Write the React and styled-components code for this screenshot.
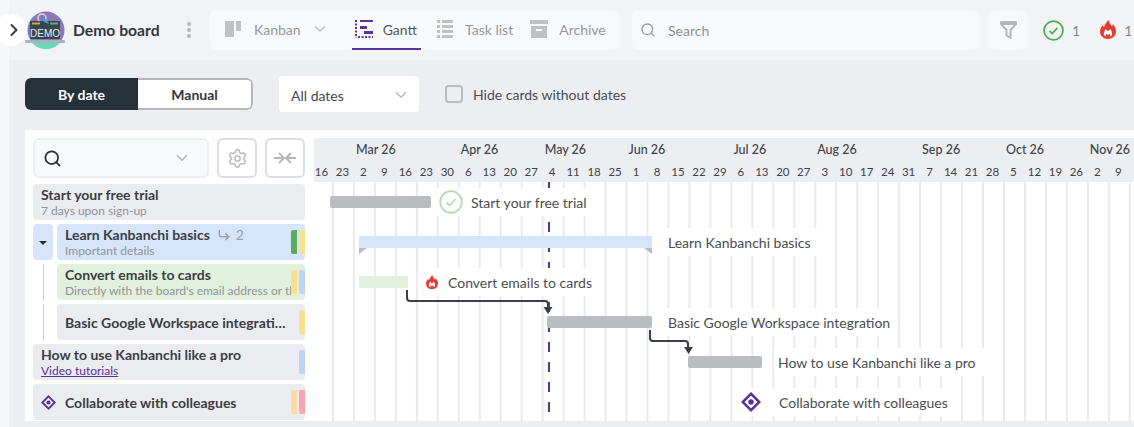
import styled, { createGlobalStyle } from "styled-components";
import { ChevronDown, ChevronRight, Search, Settings, CornerDownRight } from "lucide-react";

const DAYS = [16,23,2,9,16,23,30,6,13,20,27,4,11,18,25,1,8,15,22,29,6,13,20,27,3,10,17,24,31,7,14,21,28,5,12,19,26,2,9];
const MONTHS = [
    { name: "", span: 2 },
    { name: "Mar 26", span: 5 },
    { name: "Apr 26", span: 4 },
    { name: "May 26", span: 4 },
    { name: "Jun 26", span: 5 },
    { name: "Jul 26", span: 4 },
    { name: "Aug 26", span: 5 },
    { name: "Sep 26", span: 4 },
    { name: "Oct 26", span: 4 },
    { name: "Nov 26", span: 2 },
];

function FireIcon({ size = 16 }) {
    return (
        <svg width={size} height={size * 1.19} viewBox="0 0 16 19">
            <path fill="#e23d32" d="M8.500 0c.5 3 2.300 4.500 3.500 6.500.5-.8.8-1.500.7-2.500C14.800 6 16 8.500 16 11.500 16 15.800 12.500 19 8 19S0 15.800 0 11.500C0 8.500 1.500 6.500 3 5c.2 1 .4 1.700 1 2.300C4.500 4.500 6.500 2.500 8.500 0Z" />
            <path fill="#fff" d="M3.800 14.500c0-2.500 1-4 1.700-5.500L8 11.200 10.500 9c.7 1.500 1.700 3 1.700 5.500-.5.9-1.200 1.500-2.200 1.900v-3L8 15l-2-1.600v3c-1-.4-1.700-1-2.200-1.900Z" />
        </svg>
    );
}

function DiamondIcon({ size = 16 }) {
    return (
        <svg width={size} height={size} viewBox="0 0 16 16">
            <path fill="none" stroke="#5a3399" strokeWidth="2" d="M8 1.400 14.600 8 8 14.600 1.400 8Z" />
            <circle cx="8" cy="8" r="2.200" fill="#5a3399" />
        </svg>
    );
}

function CheckIcon({ size, color, weight }) {
    return (
        <svg width={size} height={size} viewBox="0 0 24 24">
            <circle cx="12" cy="12" r="10.800" fill="none" stroke={color} strokeWidth={weight} />
            <path fill="none" stroke={color} strokeWidth={weight} d="M7.500 12.500l3 3 6-6.500" />
        </svg>
    );
}

function Avatar() {
    return (
        <svg width="40" height="40" viewBox="0 0 40 40">
            <circle cx="21" cy="20" r="18.500" fill="#8b78b6" />
            <path fill="#62dcb4" d="M5 30h32a18.500 18.500 0 0 1-32 0Z" />
            <circle cx="17" cy="8" r="4" fill="none" stroke="#d9d2e8" strokeWidth="1.500" />
            <rect x="5" y="11" width="30" height="18" rx="1" fill="#37474f" />
            <rect x="7" y="12.500" width="8" height="2" fill="#c4a94a" />
            <rect x="25" y="12.500" width="8" height="2" fill="#5fb27a" />
            <path fill="#3aa0d8" d="M17 8l5 2 2 4-5-2Z" />
            <text x="20" y="26.500" textAnchor="middle" fontFamily="Liberation Sans" fontSize="10" fill="#e8edf0">DEMO</text>
            <rect x="0" y="30" width="40" height="3" rx="1" fill="#a8b4ba" />
        </svg>
    );
}

export default function App() {
    return (
        <>
            <GlobalStyle />
            <Page>
                <CollapseButton><ChevronRight size={20} strokeWidth={2.500} /></CollapseButton>
                <TopBar>
                    <Avatar />
                    <BoardName>Demo board</BoardName>
                    <Kebab><i /><i /><i /></Kebab>
                    <TabGroup>
                        <Tab $after={7} $gap={13}>
                            <svg width="16" height="16" viewBox="0 0 16 16">
                                <path fill="#bfc1c4" d="M0 0h9v16H0zM11 0h5v10h-5z" />
                            </svg>
                            <TabText>Kanban</TabText>
                            <TabCaret><ChevronDown size={18} color="#bfc1c4" /></TabCaret>
                        </Tab>
                        <Tab $active>
                            <svg width="18" height="18" viewBox="0 0 18 18">
                                <path fill="none" stroke="#5a3399" strokeWidth="2" strokeDasharray="2 1.500" d="M1 0v18M3 17h15" />
                                <path fill="#5a3399" d="M5 0h13v2H5zM5 6h7v3H5zM9 11h9v3H9z" />
                            </svg>
                            <TabText $active>Gantt</TabText>
                        </Tab>
                        <Tab $after={1} $gap={12}>
                            <svg width="16" height="18" viewBox="0 0 16 18">
                                <path fill="#bfc1c4" d="M0 0h3v3H0zM5 0h11v3H5zM0 5h3v3H0zM5 5h11v3H5zM0 10h3v3H0zM5 10h11v3H5zM0 15h3v3H0zM5 15h11v3H5z" />
                            </svg>
                            <TabText>Task list</TabText>
                        </Tab>
                        <Tab $gap={11}>
                            <svg width="18" height="18" viewBox="0 0 18 18">
                                <path fill="#bfc1c4" fillRule="evenodd" d="M0 0h18v4H0zM1 6h16v12H1zM6 9v2h6V9z" />
                            </svg>
                            <TabText>Archive</TabText>
                        </Tab>
                    </TabGroup>
                    <SearchBox>
                        <Search size={16} color="#9a9da1" />
                        <span>Search</span>
                    </SearchBox>
                    <FilterBox>
                        <svg width="17" height="18" viewBox="0 0 17 18">
                            <path fill="none" stroke="#b4b6b9" strokeWidth="2" strokeLinejoin="round" d="M1 1h15v2l-5.500 6v8l-4-2.500V9L1 3Zm0 2h15" />
                        </svg>
                    </FilterBox>
                    <Counter $first>
                        <CheckIcon size={21} color="#4caf50" weight={2} />
                        <CounterValue>1</CounterValue>
                    </Counter>
                    <Counter>
                        <FireIcon size={16} />
                        <CounterValue>1</CounterValue>
                    </Counter>
                </TopBar>

                <Controls>
                    <Toggle>
                        <ToggleOption $on>By date</ToggleOption>
                        <ToggleOption>Manual</ToggleOption>
                    </Toggle>
                    <DateSelect>
                        All dates
                        <ChevronDown size={18} color="#b9bbbe" />
                    </DateSelect>
                    <CheckLabel>
                        <CheckBox />
                        Hide cards without dates
                    </CheckLabel>
                </Controls>

                <Board>
                    <SidePanel>
                        <PanelTools>
                            <CardSearch>
                                <Search size={19} color="#2b2f33" strokeWidth={2.200} />
                                <ChevronDown size={18} color="#b4b6b9" />
                            </CardSearch>
                            <ToolButton><Settings size={21} strokeWidth={1.600} /></ToolButton>
                            <ToolButton>
                                <svg width="22" height="14" viewBox="0 0 22 14">
                                    <path fill="none" stroke="#b4b6b9" strokeWidth="1.800" d="M0 7h9M5 2l5 5-5 5M22 7h-9M17 2l-5 5 5 5" />
                                </svg>
                            </ToolButton>
                        </PanelTools>
                        <Rows>
                            <Card>
                                <CardText>
                                    <CardTitle>Start your free trial</CardTitle>
                                    <CardSub>7 days upon sign-up</CardSub>
                                </CardText>
                            </Card>
                            <TreeRow>
                                <Expander />
                                <Card $tone="#d7e5fb">
                                    <CardText>
                                        <CardTitle>
                                            Learn Kanbanchi basics
                                            <SubCount><CornerDownRight size={14} strokeWidth={2.400} />2</SubCount>
                                        </CardTitle>
                                        <CardSub>Important details</CardSub>
                                    </CardText>
                                    <Tags>
                                        <Tag $color="#5aad5e" />
                                        <Tag $color="#fbe08c" />
                                    </Tags>
                                </Card>
                            </TreeRow>
                            <TreeRow>
                                <TreeLine />
                                <Card $tone="#e2f0dd">
                                    <CardText>
                                        <CardTitle>Convert emails to cards</CardTitle>
                                        <CardSub>Directly with the board's email address or through the add-on</CardSub>
                                    </CardText>
                                    <Tags>
                                        <Tag $color="#fbe08c" />
                                        <Tag $color="#bcd4f6" />
                                    </Tags>
                                </Card>
                            </TreeRow>
                            <TreeRow>
                                <TreeLine />
                                <Card>
                                    <CardText>
                                        <CardTitle>Basic Google Workspace integration</CardTitle>
                                    </CardText>
                                    <Tags>
                                        <Tag $color="#fbe08c" />
                                    </Tags>
                                </Card>
                            </TreeRow>
                            <Card>
                                <CardText>
                                    <CardTitle>How to use Kanbanchi like a pro</CardTitle>
                                    <CardLink>Video tutorials</CardLink>
                                </CardText>
                                <Tags>
                                    <Tag $color="#bcd4f6" />
                                </Tags>
                            </Card>
                            <Card>
                                <MilestoneSlot><DiamondIcon size={15} /></MilestoneSlot>
                                <CardText>
                                    <CardTitle>Collaborate with colleagues</CardTitle>
                                </CardText>
                                <Tags>
                                    <Tag $color="#fbd9a5" />
                                    <Tag $color="#fba6ae" />
                                </Tags>
                            </Card>
                        </Rows>
                    </SidePanel>

                    <Timeline>
                        <TimelineHead>
                            <MonthRow>
                                {MONTHS.map((m, i) => <Month key={i} $span={m.span}>{m.name}</Month>)}
                            </MonthRow>
                            <DayRow>
                                {DAYS.map((d, i) => <Day key={i}>{d}</Day>)}
                            </DayRow>
                        </TimelineHead>
                        <Chart>
                            <TodayLine />
                            <Bar $left={16} $top={14} $width={101} $color="#bbbcbf" />
                            <BarLabel $left={121} $top={6}>
                                <CheckIcon size={24} color="#b5dab8" weight={1.800} />
                                Start your free trial
                            </BarLabel>

                            <Bar $left={45} $top={54} $width={293} $color="#d7e5fb" $square />
                            <Corner $left={45} $top={66} />
                            <Corner $left={330} $top={66} $flip />
                            <BarLabel $left={350} $top={46}>Learn Kanbanchi basics</BarLabel>

                            <Bar $left={45} $top={94} $width={49} $color="#e2f0dd" $square />
                            <BarLabel $left={108} $top={86} $gap={10}>
                                <FireIcon size={12} />
                                Convert emails to cards
                            </BarLabel>

                            <Bar $left={233} $top={134} $width={105} $color="#bbbcbf" />
                            <BarLabel $left={350} $top={126}>Basic Google Workspace integration</BarLabel>

                            <Bar $left={374} $top={174} $width={74} $color="#bbbcbf" />
                            <BarLabel $left={460} $top={166}>How to use Kanbanchi like a pro</BarLabel>

                            <BarLabel $left={423} $top={206} $gap={18}>
                                <DiamondIcon size={20} />
                                Collaborate with colleagues
                            </BarLabel>

                            <Links width="820" height="239" viewBox="0 0 820 239">
                                <path fill="none" stroke="#3b3d4a" strokeWidth="2" d="M93 108v8q0 3 3 3h135q3 0 3 3v6" />
                                <path fill="#3b3d4a" d="M229.500 125h9l-4.500 7Z" />
                                <path fill="none" stroke="#3b3d4a" strokeWidth="2" d="M336 148v8q0 3 3 3h32q3 0 3 3v4" />
                                <path fill="#3b3d4a" d="M370 165h9l-4.500 7Z" />
                            </Links>
                        </Chart>
                    </Timeline>
                </Board>
            </Page>
        </>
    );
}

const GlobalStyle = createGlobalStyle`
    html, body{
        margin: 0;
        height: 427px;
        overflow: hidden;
        background: #f6f7fa;
    }
    *{
        box-sizing: border-box;
    }
`
const Page = styled.div`
    position: relative;
    margin-left: 9px;
    width: 1125px;
    height: 427px;
    background-color: #eceef2;
    font-family: "Lato", "Liberation Sans", sans-serif;
    color: #4a4d52;
    font-size: 14px;
    overflow: visible;
`
const CollapseButton = styled.div`
    position: absolute;
    left: -14px;
    top: 14px;
    width: 32px;
    height: 32px;
    padding-left: 6px;
    border-radius: 50%;
    background: #fff;
    color: #3c4045;
    display: flex;
    align-items: center;
    justify-content: center;
    z-index: 2;
`
const TopBar = styled.header`
    height: 60px;
    padding: 0 0 0 16px;
    display: flex;
    align-items: center;
    background: #f2f3f6;
`
const BoardName = styled.h1`
    margin: 0 0 0 8px;
    width: 114px;
    font-size: 15.700px;
    font-weight: 700;
    color: #33373d;
`
const Kebab = styled.div`
    width: 6px;
    display: flex;
    flex-direction: column;
    gap: 2px;
    i{
        width: 4px;
        height: 4px;
        border-radius: 50%;
        background: #b4b6b9;
    }
`
const TabGroup = styled.nav`
    margin-left: 17px;
    width: 410px;
    height: 40px;
    padding: 0 12px 0 15px;
    display: flex;
    gap: 16px;
    background: #f8f9fb;
    border-radius: 6px;
`
const Tab = styled.div`
    display: flex;
    align-items: center;
    gap: ${p => p.$gap || 10}px;
    height: 40px;
    padding: 0 ${p => (p.$active ? "4px" : "0")} 0 ${p => (p.$active ? "3px" : "0")};
    margin-right: ${p => p.$after || 0}px;
    border-bottom: 2px solid ${p => (p.$active ? "#5a3399" : "transparent")};
`
const TabText = styled.span`
    font-size: 14px;
    color: ${p => (p.$active ? "#55585d" : "#95989c")};
`
const TabCaret = styled.span`
    margin-left: -3px;
    display: flex;
`
const SearchBox = styled.div`
    margin-left: 12px;
    width: 348px;
    height: 40px;
    padding-left: 8px;
    display: flex;
    align-items: center;
    gap: 12px;
    background: #f8f9fb;
    border-radius: 6px;
    color: #8f9296;
`
const FilterBox = styled.div`
    margin-left: 8px;
    width: 40px;
    height: 40px;
    display: flex;
    align-items: center;
    justify-content: center;
    background: #f8f9fb;
    border-radius: 6px;
`
const Counter = styled.div`
    margin-left: ${p => (p.$first ? 15 : 20)}px;
    display: flex;
    align-items: center;
    gap: 8px;
`
const CounterValue = styled.span`
    color: #85888c;
    font-size: 14px;
`
const Controls = styled.div`
    height: 70px;
    padding: 16px 0 0 16px;
    display: flex;
    align-items: flex-start;
`
const Toggle = styled.div`
    margin-top: 2px;
    width: 228px;
    height: 32px;
    display: flex;
    border-radius: 6px;
    overflow: hidden;
    background: #fff;
`
const ToggleOption = styled.div`
    flex: 1;
    display: flex;
    align-items: center;
    justify-content: center;
    font-weight: 700;
    font-size: 14px;
    color: ${p => (p.$on ? "#fff" : "#33373d")};
    background: ${p => (p.$on ? "#25323a" : "#fff")};
    border: ${p => (p.$on ? "none" : "2px solid #b5b7ba")};
    border-left: none;
    border-radius: ${p => (p.$on ? "0" : "0 6px 6px 0")};
`
const DateSelect = styled.div`
    margin-left: 26px;
    width: 140px;
    height: 36px;
    padding: 2px 9px 0 12px;
    display: flex;
    align-items: center;
    justify-content: space-between;
    background: #fff;
    border-radius: 4px;
    color: #43474c;
`
const CheckLabel = styled.label`
    margin: 9px 0 0 26px;
    display: flex;
    align-items: center;
    gap: 10px;
    color: #4a4d52;
`
const CheckBox = styled.span`
    width: 18px;
    height: 18px;
    border: 2px solid #b9bbbe;
    border-radius: 4px;
`
const Board = styled.section`
    margin-left: 16px;
    height: 291px;
    display: flex;
    background: #fff;
`
const SidePanel = styled.aside`
    width: 289px;
    flex-shrink: 0;
    padding: 8px 9px 0 8px;
`
const PanelTools = styled.div`
    height: 40px;
    display: flex;
    gap: 8px;
`
const CardSearch = styled.div`
    width: 176px;
    padding: 0 16px 0 8px;
    display: flex;
    align-items: center;
    justify-content: space-between;
    background: #f8f9fb;
    border: 2px solid #eceef1;
    border-radius: 6px;
`
const ToolButton = styled.div`
    width: 40px;
    display: flex;
    align-items: center;
    justify-content: center;
    color: #b4b6b9;
    border: 2px solid #dcdde0;
    border-radius: 6px;
`
const Rows = styled.div`
    margin-top: 6px;
    display: flex;
    flex-direction: column;
    gap: 4px;
`
const TreeRow = styled.div`
    display: flex;
`
const Expander = styled.div`
    width: 20px;
    height: 36px;
    margin-right: 4px;
    flex-shrink: 0;
    display: flex;
    align-items: center;
    justify-content: center;
    background: #d7e5fb;
    border-radius: 4px;
    &::before{
        content: "";
        margin-top: 1px;
        border: 4px solid transparent;
        border-top: 4px solid #25323a;
        border-bottom: none;
    }
`
const TreeLine = styled.div`
    width: 24px;
    height: 36px;
    flex-shrink: 0;
    padding-left: 10px;
    &::before{
        content: "";
        display: block;
        width: 1px;
        height: 100%;
        background: #c9cbce;
    }
`
const Card = styled.div`
    flex: 1 1 auto;
    min-width: 0;
    height: 36px;
    padding-left: 8px;
    display: flex;
    align-items: center;
    background: ${p => p.$tone || "#ebecef"};
    border-radius: 4px;
    overflow: hidden;
`
const MilestoneSlot = styled.div`
    width: 24px;
    flex-shrink: 0;
    display: flex;
`
const CardText = styled.div`
    flex: 1;
    min-width: 0;
    overflow: hidden;
`
const CardTitle = styled.div`
    padding-right: 3px;
    font-size: 14px;
    line-height: 17px;
    font-weight: 700;
    color: #3a3e44;
    white-space: nowrap;
    overflow: hidden;
    text-overflow: ellipsis;
`
const SubCount = styled.span`
    margin-left: 7px;
    display: inline-flex;
    align-items: center;
    gap: 5px;
    font-weight: 400;
    color: #9a9da1;
    vertical-align: top;
`
const CardSub = styled.div`
    font-size: 12px;
    line-height: 15px;
    color: #90939a;
    white-space: nowrap;
    overflow: hidden;
`
const CardLink = styled.a`
    display: block;
    font-size: 12px;
    line-height: 15px;
    color: #5a3399;
    text-decoration: underline;
`
const Tags = styled.div`
    width: 14px;
    height: 24px;
    flex-shrink: 0;
    display: flex;
    justify-content: flex-end;
    gap: 2px;
`
const Tag = styled.span`
    width: 6px;
    height: 24px;
    background: ${p => p.$color};
    border-radius: 2px 0 0 2px;
`
const Timeline = styled.div`
    flex: 1;
    min-width: 0;
    overflow: hidden;
`
const TimelineHead = styled.div`
    margin-top: 8px;
    height: 44px;
    background: #eceef1;
    border-radius: 4px 0 0 0;
    overflow: hidden;
`
const MonthRow = styled.div`
    margin-left: -3px;
    height: 23px;
    display: grid;
    grid-template-columns: repeat(39, 20.970px);
    align-items: center;
`
const Month = styled.div`
    grid-column: span ${p => p.$span};
    padding: 0 0 0 3px;
    font-size: 12.500px;
    font-weight: 500;
    color: #3f4348;
    white-space: nowrap;
`
const DayRow = styled.div`
    margin-left: -3px;
    height: 20px;
    display: grid;
    grid-template-columns: repeat(39, 20.970px);
    align-items: center;
`
const Day = styled.div`
    text-align: center;
    font-size: 11.500px;
    color: #3f4348;
`
const Chart = styled.div`
    position: relative;
    height: 239px;
    background-image: linear-gradient(to right, transparent 18.970px, #e9eaec 18.970px);
    background-size: 20.970px 100%;
    background-position: -1px 0;
`
const TodayLine = styled.div`
    position: absolute;
    left: 234px;
    top: 0;
    width: 2px;
    height: 230px;
    background: repeating-linear-gradient(to bottom, #5a3399 0, #5a3399 10px, transparent 10px, transparent 20px);
`
const Bar = styled.div`
    position: absolute;
    left: ${p => p.$left}px;
    top: ${p => p.$top}px;
    width: ${p => p.$width}px;
    height: 12px;
    background: ${p => p.$color};
    border-radius: ${p => (p.$square ? "0" : "2px")};
`
const Corner = styled.div`
    position: absolute;
    left: ${p => p.$left}px;
    top: ${p => p.$top}px;
    border-top: 6px solid #bbbcbf;
    border-left: ${p => (p.$flip ? "8px solid transparent" : "none")};
    border-right: ${p => (p.$flip ? "none" : "8px solid transparent")};
`
const BarLabel = styled.div`
    position: absolute;
    left: ${p => p.$left}px;
    top: ${p => p.$top}px;
    height: 28px;
    padding: 0 8px 0 4px;
    display: flex;
    align-items: center;
    gap: ${p => p.$gap || 8}px;
    background: #fff;
    white-space: nowrap;
    color: #4a4d52;
`
const Links = styled.svg`
    position: absolute;
    left: 0;
    top: 0;
`
